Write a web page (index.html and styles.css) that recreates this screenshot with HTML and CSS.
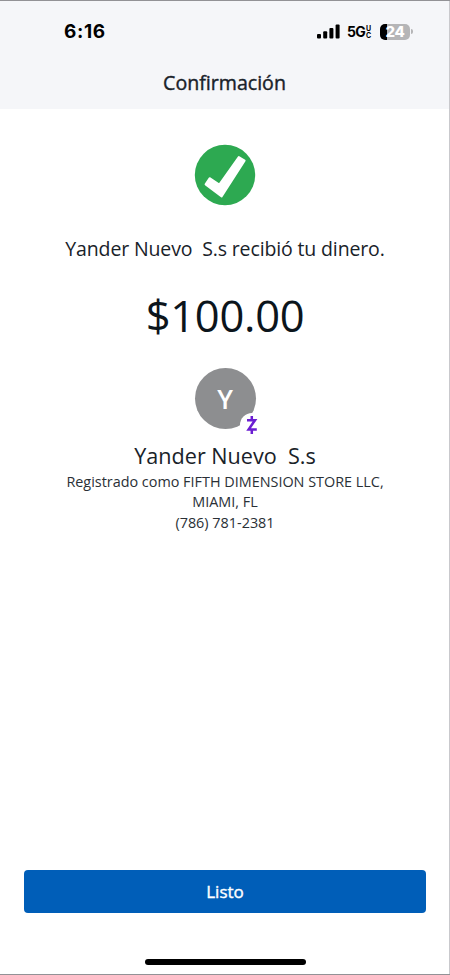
FILE: index.html
```html
<!DOCTYPE html>
<html lang="es">
<head>
<meta charset="utf-8">
<title>Confirmación</title>
<link rel="stylesheet" href="styles.css">
</head>
<body>
<div class="screen">
  <header class="header">
    <div class="status">
      <span class="time">6:16</span>
      <div class="indicators">
        <svg class="signal" width="23" height="15" viewBox="0 0 23 15"><rect x="0" y="10" width="4" height="4.5" rx="1"/><rect x="6.2" y="7.3" width="4" height="7.2" rx="1"/><rect x="12.4" y="4" width="4" height="10.5" rx="1"/><rect x="18.6" y="0.5" width="4" height="14" rx="1"/></svg>
        <span class="network">5G</span>
        <span class="uc"><span>U</span><span>C</span></span>
        <div class="battery"><span>24</span></div>
        <i class="battery-cap"></i>
      </div>
    </div>
    <h1 class="title">Confirmación</h1>
  </header>
  <main class="content">
    <svg class="check" width="62" height="62" viewBox="0 0 62 62"><circle cx="31" cy="31" r="30.2" fill="#2da951"/><path d="M15.6 34.2L25.3 40.6L44.8 13L50.6 16.6L27.6 52.4L11.6 40.4Z" fill="#fff" stroke="#fff" stroke-width="2" stroke-linejoin="round"/></svg>
    <p class="message">Yander Nuevo&nbsp; S.s recibió tu dinero.</p>
    <p class="amount">$100.00</p>
    <div class="avatar">
      <span>Y</span>
      <svg class="badge" width="24" height="24" viewBox="0 0 24 24"><circle cx="12" cy="12" r="12" fill="#fff"/><path d="M7 7.2H15L8.6 16.6H16.8M11.8 3V7M11.8 16.8V21" fill="none" stroke="#6b1ed2" stroke-width="2.5"/></svg>
    </div>
    <h2 class="name">Yander Nuevo&nbsp; S.s</h2>
    <p class="detail registered">Registrado como FIFTH DIMENSION STORE LLC,</p>
    <p class="detail city">MIAMI, FL</p>
    <p class="detail phone">(786) 781-2381</p>
  </main>
  <footer class="footer">
    <button class="done">Listo</button>
    <div class="home"></div>
  </footer>
</div>
</body>
</html>
```

FILE: styles.css
```css
* { box-sizing: border-box; margin: 0; padding: 0; }
body { background: #fff; font-family: "Open Sans", "Noto Sans", sans-serif; color: #192229; }
.screen { width: 450px; height: 975px; display: flex; flex-direction: column; border: solid #929296; border-width: 1px 0 1px 0; box-shadow: inset -1px 0 #c9c9cd; overflow: hidden; }
.header { height: 108px; margin-right: 1px; background: #f5f6f9; display: flex; flex-direction: column; }
.status { height: 60px; padding: 1px 36px 0 64px; display: flex; align-items: center; justify-content: space-between; color: #000; font-family: Inter, "Liberation Sans", sans-serif; }
.time { font-size: 19px; font-weight: 700; line-height: 24px; letter-spacing: 0.6px; }
.indicators { display: flex; align-items: center; }
.signal { fill: #000; }
.network { margin-left: 7px; width: 19px; font-size: 14px; font-weight: 700; line-height: 18px; letter-spacing: -0.6px; }
.uc { display: flex; flex-direction: column; width: 6px; font-size: 7px; font-weight: 700; line-height: 7px; }
.uc span { height: 7px; }
.battery { margin-left: 8px; width: 30px; height: 16px; border-radius: 5px; background: linear-gradient(90deg, #000 7px, #b5b5b7 7px); color: #fff; font-size: 15px; font-weight: 800; line-height: 16px; text-align: center; letter-spacing: -0.4px; }
.battery-cap { width: 2px; height: 5px; margin-left: 1px; border-radius: 0 2px 2px 0; background: #b5b5b7; }
.title { text-align: center; font-size: 19.6px; font-weight: 400; -webkit-text-stroke: 0.4px #192229; line-height: 26px; margin-top: 9px; }
.content { flex: 1; display: flex; flex-direction: column; align-items: center; white-space: nowrap; }
.check { margin-top: 35px; flex: none; }
.message { margin-top: 29px; font-size: 19.5px; line-height: 28px; letter-spacing: -0.14px; }
.amount { margin-top: 21px; font-size: 43.5px; line-height: 64px; letter-spacing: -0.3px; color: #0c151c; }
.avatar { position: relative; flex: none; margin-top: 20px; width: 61px; height: 61px; border-radius: 50%; background: #8d8e90; color: #fff; display: flex; align-items: center; justify-content: center; font-size: 26.5px; font-weight: 600; line-height: 34px; }
.badge { position: absolute; left: 45px; top: 45px; }
.name { margin-top: 11px; font-size: 21.6px; font-weight: 400; line-height: 32px; }
.detail { font-size: 14.4px; line-height: 20px; color: #2a3036; }
.phone { margin-top: 1px; }
.footer { display: flex; flex-direction: column; align-items: center; }
.done { width: 402px; height: 43px; border: 0; border-radius: 4px; background: #005eb8; color: #fff; font: 400 17px/24px "Open Sans", sans-serif; -webkit-text-stroke: 0.4px #fff; }
.home { width: 161px; height: 6px; margin: 46px 0 9px; border-radius: 3px; background: #000; }
```
